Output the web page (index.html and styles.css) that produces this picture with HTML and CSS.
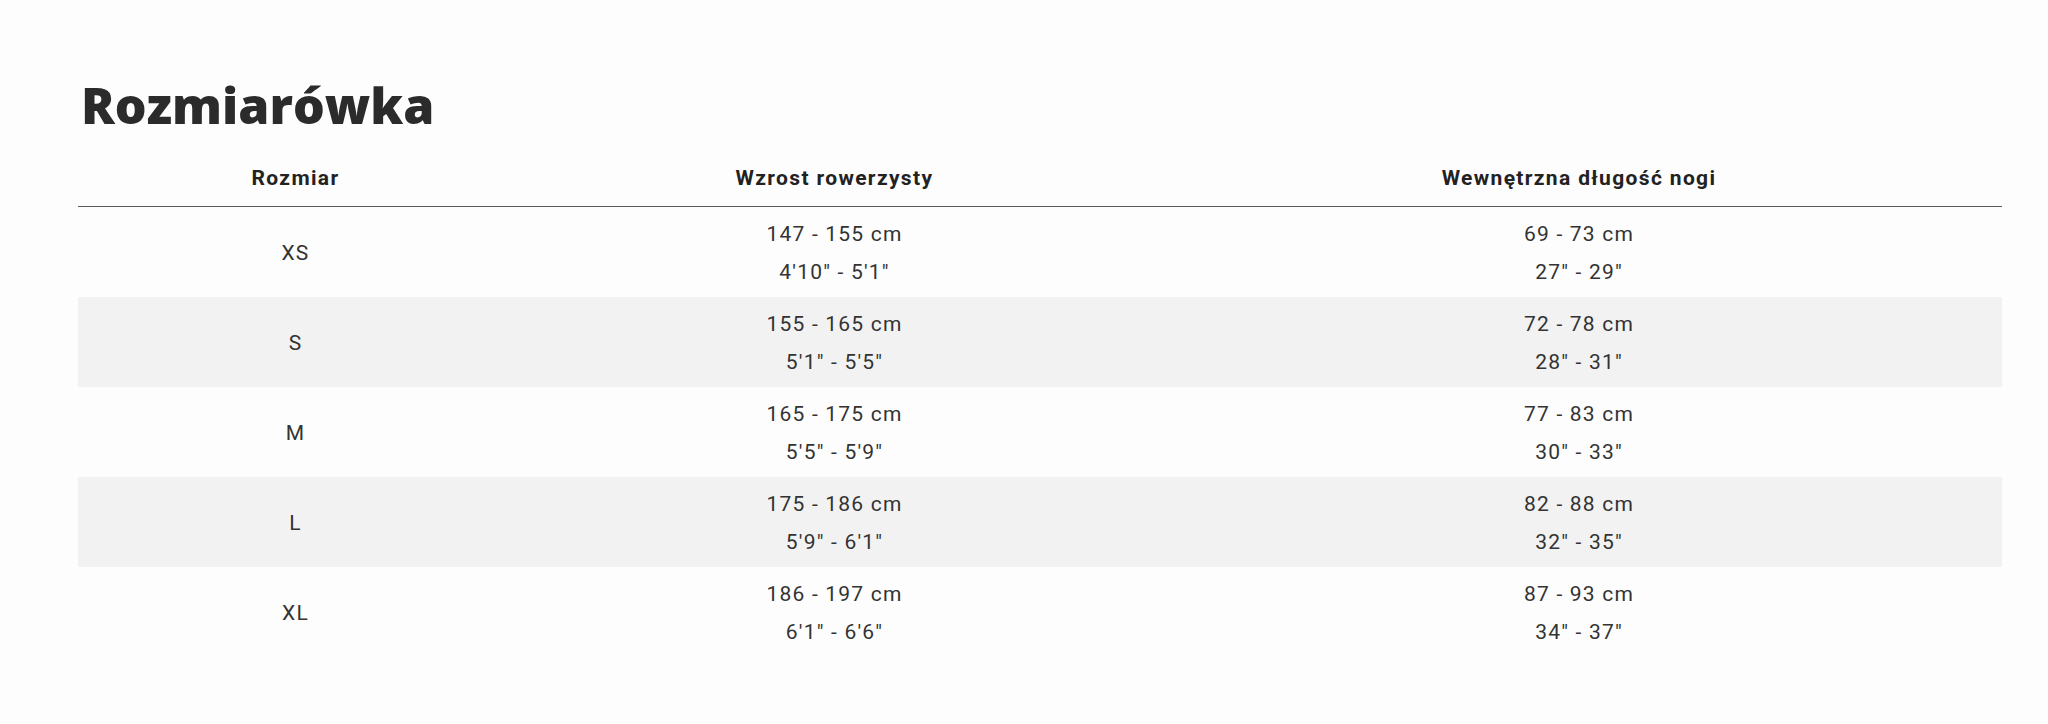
FILE: index.html
```html
<!DOCTYPE html>
<html lang="pl">
<head>
<meta charset="utf-8">
<title>Rozmiarówka</title>
<link rel="stylesheet" href="styles.css">
</head>
<body>
<main class="page">
  <h1 class="title">Rozmiarówka</h1>
  <table class="sizes">
    <colgroup>
      <col class="c1"><col class="c2"><col class="c3">
    </colgroup>
    <thead>
      <tr><th>Rozmiar</th><th>Wzrost rowerzysty</th><th>Wewnętrzna długość nogi</th></tr>
    </thead>
    <tbody>
      <tr><td>XS</td><td>147 - 155 cm<br>4'10" - 5'1"</td><td>69 - 73 cm<br>27" - 29"</td></tr>
      <tr><td>S</td><td>155 - 165 cm<br>5'1" - 5'5"</td><td>72 - 78 cm<br>28" - 31"</td></tr>
      <tr><td>M</td><td>165 - 175 cm<br>5'5" - 5'9"</td><td>77 - 83 cm<br>30" - 33"</td></tr>
      <tr><td>L</td><td>175 - 186 cm<br>5'9" - 6'1"</td><td>82 - 88 cm<br>32" - 35"</td></tr>
      <tr><td>XL</td><td>186 - 197 cm<br>6'1" - 6'6"</td><td>87 - 93 cm<br>34" - 37"</td></tr>
    </tbody>
  </table>
</main>
</body>
</html>
```
FILE: styles.css
```css
html, body {
  margin: 0;
  padding: 0;
  background: #fdfdfd;
}
.page {
  padding: 0 46px 0 78px;
}
.title {
  margin: 0;
  padding-top: 73px;
  padding-left: 3px;
  font-family: "Open Sans", "Lato", sans-serif;
  font-weight: 800;
  font-size: 50px;
  line-height: 64px;
  color: #2b2b2b;
  letter-spacing: 0;
}
.sizes {
  width: 1924px;
  margin-top: 13px;
  border-collapse: collapse;
  table-layout: fixed;
}
.c1 { width: 435px; }
.c2 { width: 643px; }
.c3 { width: 846px; }
.sizes th {
  height: 56px;
  padding: 0;
  font-family: "Roboto", "Liberation Sans", sans-serif;
  font-weight: 700;
  font-size: 21px;
  line-height: 56px;
  color: #222;
  text-align: center;
  letter-spacing: 1.35px;
  border-bottom: 1.5px solid #5c5c5c;
}
.sizes td {
  height: 90px;
  box-sizing: border-box;
  padding: 8px 0 6px;
  font-family: "Roboto", "Liberation Sans", sans-serif;
  font-size: 21px;
  line-height: 38px;
  color: #333;
  text-align: center;
  vertical-align: middle;
  letter-spacing: 1.2px;
}
.sizes tbody tr:nth-child(even) td {
  background: #f2f2f2;
}
```
